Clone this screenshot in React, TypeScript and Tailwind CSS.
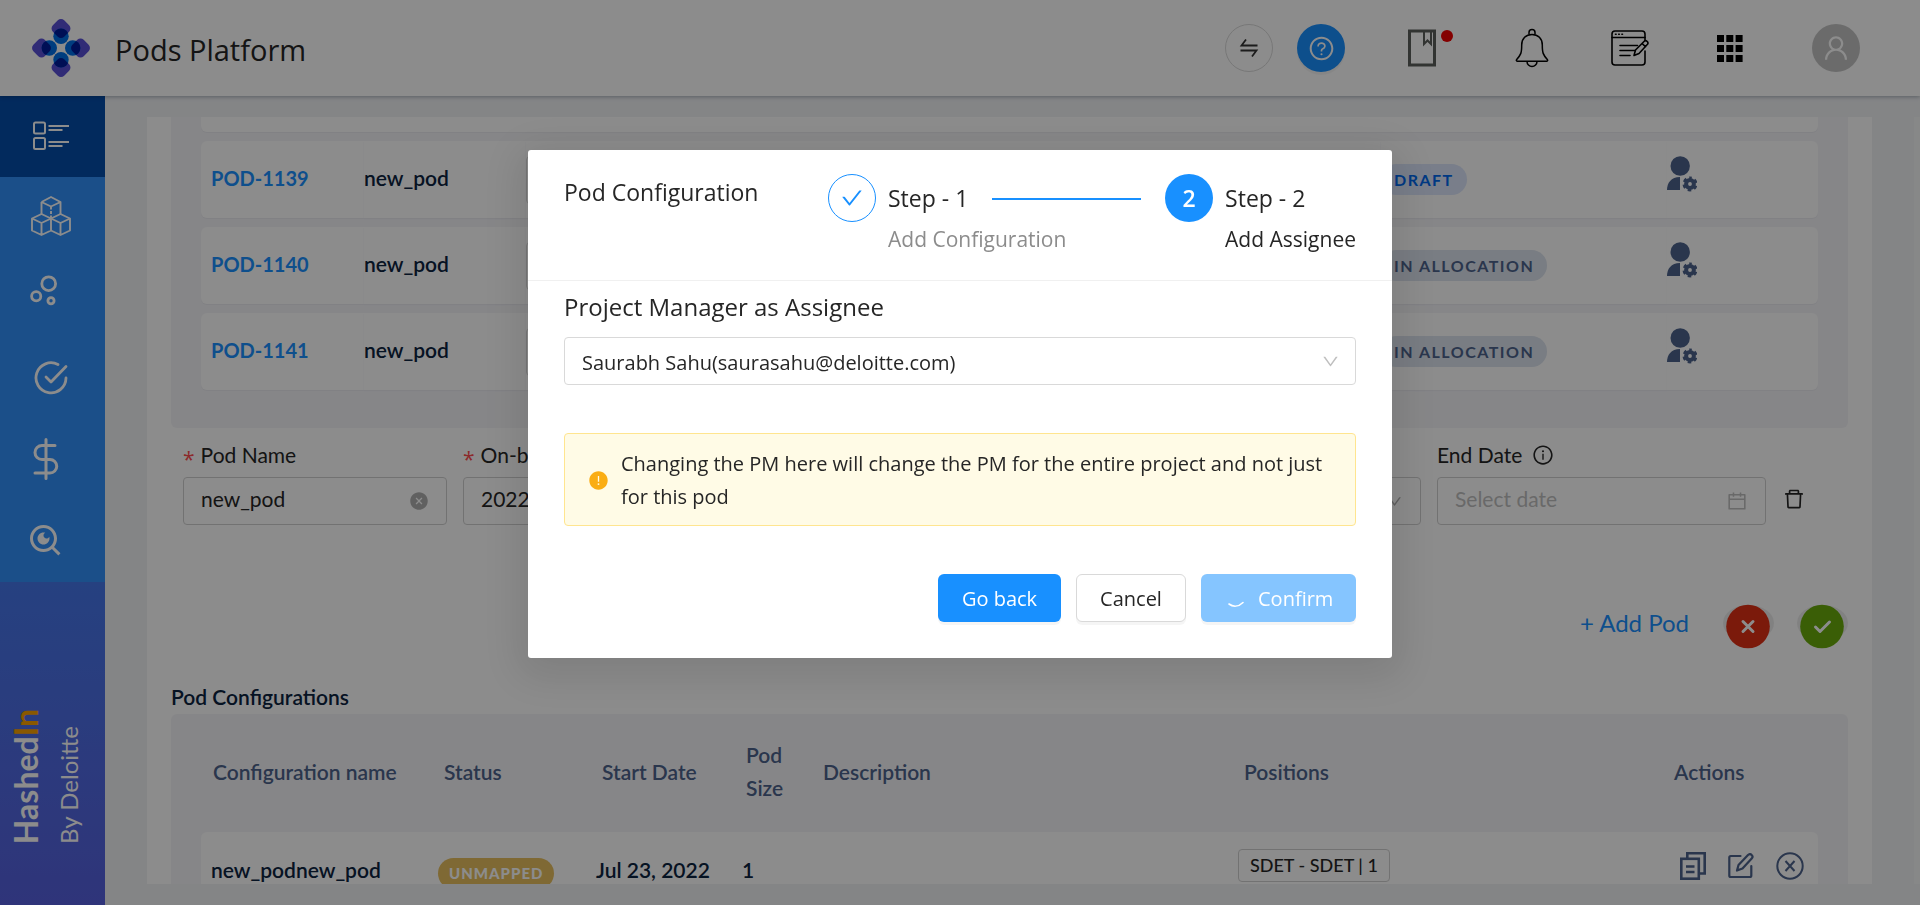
import type { ReactNode } from "react";
import {
  AiFillCloseCircle,
  AiFillExclamationCircle,
  AiOutlineCalendar,
  AiOutlineCheck,
  AiOutlineDelete,
  AiOutlineDown,
  AiOutlineInfoCircle,
  AiOutlineQuestionCircle,
  AiOutlineUser,
} from "react-icons/ai";
import { RiSearchEyeLine } from "react-icons/ri";

const BODY_FONT = "font-['Lato',sans-serif]";
const UI_FONT = "font-['Open_Sans','Noto_Sans',sans-serif]";

function Logo() {
  const petal = (deg: number) => (
    <g key={deg} transform={`rotate(${deg} 29 29)`}>
      <rect x="21" y="1.500" width="16" height="16" rx="4.500" transform="rotate(45 29 9.500)" fill="#5a50d8" />
      <circle cx="29" cy="17.300" r="7.700" fill="#0070e8" />
      <clipPath id={`petal-${deg}`}>
        <rect x="21" y="1.500" width="16" height="16" rx="4.500" transform="rotate(45 29 9.500)" />
      </clipPath>
      <circle cx="29" cy="17.300" r="7.700" fill="#001c9c" clipPath={`url(#petal-${deg})`} />
    </g>
  );
  return (
    <svg viewBox="0 0 58 58" className="size-[58px] shrink-0" aria-hidden="true">
      {[0, 90, 180, 270].map(petal)}
    </svg>
  );
}

function SwapIcon() {
  return (
    <svg viewBox="0 0 20 20" className="size-5" fill="none" stroke="#333" strokeWidth="1.800" aria-hidden="true">
      <path d="M18.500 7.500H2.500L7 1.500M1.500 12.500H17.500L13 18.500" />
    </svg>
  );
}

function BookmarkIcon() {
  return (
    <svg viewBox="0 0 46 38" className="h-[38px] w-[46px]" fill="none" aria-hidden="true">
      <rect x="2.500" y="2" width="25" height="34" stroke="#5c605c" strokeWidth="3" />
      <path d="M17 3v12l3.500-3.500L24 15V3" stroke="#5c605c" strokeWidth="2" />
      <circle cx="40" cy="7" r="6" fill="#f00000" />
    </svg>
  );
}

function BellIcon() {
  return (
    <svg viewBox="0 0 34 40" className="h-10 w-[34px]" fill="none" stroke="#000" strokeWidth="1.500" strokeLinejoin="round" aria-hidden="true">
      <path d="M14 6.500V4.500a3 3 0 0 1 6 0v2" />
      <path d="M17 6.500c-6 0-10.300 4-10.300 10.500 0 8-.7 9.500-5 14.500-.7 1-.2 1.800.8 1.800h29c1 0 1.500-.8.800-1.800-4.300-5-5-6.500-5-14.500C27.300 10.500 23 6.500 17 6.500z" />
      <path d="M12 33.500a5 5 0 0 0 10 0" />
    </svg>
  );
}

function NotesIcon() {
  return (
    <svg viewBox="0 0 38 36" className="h-9 w-[38px]" fill="none" stroke="#000" strokeWidth="1.600" strokeLinejoin="round" strokeLinecap="round" aria-hidden="true">
      <path d="M34 11V4a3 3 0 0 0-3-3H4a3 3 0 0 0-3 3v28a3 3 0 0 0 3 3h27a3 3 0 0 0 3-3V21" />
      <path d="M1 7.500h33M4.500 4.300h.6M7.700 4.300h.6M10.900 4.300h.6" />
      <path d="M9 15.500h17.500M9 20.500h15M9 25.500h10" />
      <path d="m23 25.500 1.500-5.500L33 11.500c2-2 5 .5 3.500 2.800L28 23.500l-5 2zM31 13.500l3.500 3.200" fill="#fff" />
    </svg>
  );
}

function GridIcon() {
  return (
    <svg viewBox="0 0 26 27" className="h-[27px] w-[26px]" fill="#000" aria-hidden="true">
      {[0, 1, 2].map((r) => [0, 1, 2].map((c) => <rect key={`${r}${c}`} x={c * 9.300} y={r * 10} width="7" height="7" />))}
    </svg>
  );
}

function ListIcon() {
  return (
    <svg viewBox="0 0 36 30" className="h-[30px] w-9" fill="none" stroke="#fff" strokeWidth="2" aria-hidden="true">
      <rect x="1" y="1.500" width="11" height="11" rx="1.500" />
      <rect x="1" y="17" width="11" height="11" rx="1.500" />
      <path d="M15.500 5H36M15.500 9H29.500M15.500 21H36M15.500 25H29.500" />
    </svg>
  );
}

function CubesIcon() {
  return (
    <svg viewBox="0 0 40 40" className="size-10" fill="none" stroke="#fff" strokeWidth="1.900" strokeLinejoin="round" aria-hidden="true">
      <path d="M10.500 6 20 1l9.500 5v12M10.500 6v12M10.500 6 20 10.500 29.500 6" />
      <path d="M20 10.500V22" strokeDasharray="3 1.500" />
      <path d="M1 22.500 10.500 18 20 22.500v12L10.500 39 1 34.500zM1 22.500l9.500 4.500 9.500-4.500M10.500 27v12" />
      <path d="M20 22.500 29.500 18l9.500 4.500v12L29.500 39 20 34.500M20 22.500l9.500 4.500 9.500-4.500M29.500 27v12" />
    </svg>
  );
}

function BubblesIcon() {
  return (
    <svg viewBox="0 0 28 31" className="h-[31px] w-7" fill="none" stroke="#fff" strokeWidth="2.800" aria-hidden="true">
      <circle cx="18.700" cy="8.700" r="6.900" />
      <circle cx="6.200" cy="21.200" r="4.600" />
      <circle cx="21" cy="25.700" r="3.100" />
    </svg>
  );
}

function TaskIcon() {
  return (
    <svg viewBox="0 0 34 34" className="size-[34px]" fill="none" stroke="#fff" strokeWidth="2.800" strokeLinecap="round" strokeLinejoin="round" aria-hidden="true">
      <path d="M24 3.500A15 15 0 1 0 32 17" />
      <path d="m12 16 5 5L32 5.500" />
    </svg>
  );
}

function DollarIcon() {
  return (
    <svg viewBox="0 0 26 42" className="h-[42px] w-[26px]" fill="none" stroke="#fff" strokeWidth="3" strokeLinecap="round" aria-hidden="true">
      <path d="M13 1.500v39M22 7.500H9a6.500 6.500 0 0 0 0 14h8a6.500 6.500 0 0 1 0 13.500H2" />
    </svg>
  );
}

function UserGearIcon() {
  return (
    <svg viewBox="0 0 30 36" className="h-9 w-[30px]" aria-hidden="true">
      <ellipse cx="13.200" cy="10" rx="9.700" ry="9.800" fill="#4d638c" />
      <path d="M13 21v13H0c0-7 4-13 13-13z" fill="#4d638c" />
      <circle cx="23" cy="28" r="3.900" fill="none" stroke="#4d638c" strokeWidth="4" />
      <circle cx="23" cy="28" r="6" fill="none" stroke="#4d638c" strokeWidth="3" strokeDasharray="3.400 2.883" strokeDashoffset="1.700" transform="rotate(-90 23 28)" />
    </svg>
  );
}

function CopyIcon() {
  return (
    <svg viewBox="0 0 26 28" className="h-7 w-[26px]" fill="none" stroke="#4d638c" strokeWidth="2.600" aria-hidden="true">
      <path d="M7.300 6V1.300h17.400V21.500H20" />
      <rect x="1.300" y="6.800" width="17.500" height="19.900" />
      <path d="M6 14.500h8.500M6 20h8.500" />
    </svg>
  );
}

function EditIcon() {
  return (
    <svg viewBox="0 0 26 26" className="size-[26px]" fill="none" stroke="#4d638c" strokeWidth="2.200" strokeLinecap="round" strokeLinejoin="round" aria-hidden="true">
      <path d="M12.500 3H2.800C2 3 1.300 3.700 1.300 4.500v18c0 .8.700 1.500 1.500 1.500h19c.8 0 1.500-.7 1.500-1.500V13" />
      <path d="M9 17.500 10.500 12 20 2c2.500-2.300 6 1 3.700 3.500L14.500 15.500z" />
    </svg>
  );
}

function CloseRingIcon() {
  return (
    <svg viewBox="0 0 28 28" className="size-7" fill="none" stroke="#4d638c" strokeWidth="2" aria-hidden="true">
      <circle cx="14" cy="14" r="12.700" />
      <path d="M9.500 9l9 10M18.500 9l-9 10" />
    </svg>
  );
}

function RoundAction({ label, fill, children }: { label: string; fill: string; children: ReactNode }) {
  return (
    <button type="button" aria-label={label}>
      <svg viewBox="0 0 51 52" className="h-[52px] w-[51px]" aria-hidden="true">
        <ellipse cx="25.500" cy="26" rx="25.500" ry="18" fill="#ececec" />
        <circle cx="25" cy="29.500" r="21.800" fill={fill} />
        <g fill="none" stroke="#fff" strokeWidth="3" strokeLinecap="round" strokeLinejoin="round">
          {children}
        </g>
      </svg>
    </button>
  );
}

function NavItem({ label, className, children }: { label: string; className: string; children: ReactNode }) {
  return (
    <a href="#" aria-label={label} className={`flex h-[81px] items-center ${className}`}>
      {children}
    </a>
  );
}

const pods = [
  { id: "POD-1139", status: "DRAFT", tone: "bg-[#dce6fb] text-[#0068ee]" },
  { id: "POD-1140", status: "IN ALLOCATION", tone: "bg-[#dce3ee] text-[#4d638c]" },
  { id: "POD-1141", status: "IN ALLOCATION", tone: "bg-[#dce3ee] text-[#4d638c]" },
];

function PodsTable() {
  const cell = "bg-white p-0 shadow-[0_1px_1px_#ebebf0]";
  return (
    <div className="rounded-b-md bg-[#f5f5f8] px-[30px] pb-[29px]">
      <table className="-mt-[9px] w-full table-fixed border-separate border-spacing-x-0 border-spacing-y-[9px] text-left text-[21px] leading-[33px]">
        <colgroup>
          <col className="w-[163px]" />
          <col className="w-[162px]" />
          <col />
          <col className="w-[286px]" />
          <col className="w-[151px]" />
        </colgroup>
        <tbody>
          <tr className="h-[15px]">
            <td colSpan={5} className={`${cell} rounded-b-md`} />
          </tr>
          {pods.map((pod) => (
            <tr key={pod.id} className="h-[77px]">
              <td className={`${cell} rounded-l-md pb-1 pl-2.5`}>
                <a href="#" className="text-[20px] font-bold text-[#1a90ff]">{pod.id}</a>
              </td>
              <td className={`${cell} pb-1 font-semibold text-[#0c2340]`}>new_pod</td>
              <td className={cell}>
                <select aria-label="Configuration" className="block h-12 w-[300px] appearance-none rounded-sm border border-[#d9d9d9]" />
              </td>
              <td className={`${cell} pb-1`}>
                <span className={`inline-block rounded-full px-[13px] align-middle text-[16px] leading-[31px] font-bold tracking-[1.5px] ${pod.tone}`}>
                  {pod.status}
                </span>
              </td>
              <td className={`${cell} rounded-r-md pb-3`}>
                <button type="button" aria-label={`Manage ${pod.id}`} className="block">
                  <UserGearIcon />
                </button>
              </td>
            </tr>
          ))}
        </tbody>
      </table>
    </div>
  );
}

function Field({ id, label, required, info, className, children }: {
  id: string; label: string; required?: boolean; info?: boolean; className: string; children: ReactNode;
}) {
  return (
    <div className={className}>
      <label htmlFor={id} className="mb-1.5 flex h-[33px] items-center leading-[33px] whitespace-nowrap">
        {required && <span className="mt-2 mr-1.5 leading-6 font-['Open_Sans',sans-serif] text-[#ff4d4f]">*</span>}
        {label}
        {info && <AiOutlineInfoCircle className="ml-2.5 size-[22px]" />}
      </label>
      <div className="flex h-12 items-center rounded-sm border border-[#d0d0d0] px-[17px]">{children}</div>
    </div>
  );
}

function PodForm() {
  return (
    <form className="flex items-end gap-4 pt-2.5 pr-[42px] pl-3 text-[21px] text-[#262626]">
      <Field id="pod-name" label="Pod Name" required className="w-[264px]">
        <input id="pod-name" defaultValue="new_pod" className="min-w-0 flex-1 pb-1 outline-none" />
        <AiFillCloseCircle className="size-5 shrink-0 text-[#b0b0b0]" />
      </Field>
      <Field id="onboarding" label="On-boarding Date" required className="min-w-0 flex-1">
        <input id="onboarding" defaultValue="2022-07-23" className="min-w-0 flex-1 pb-1 outline-none" />
      </Field>
      <Field id="configuration" label="Configuration" required className="min-w-0 flex-1">
        <select id="configuration" className="min-w-0 flex-1 appearance-none outline-none" />
        <AiOutlineDown className="size-[17px] shrink-0 text-[#b0b0b0]" />
      </Field>
      <Field id="end-date" label="End Date" info className="w-[329px]">
        <input id="end-date" placeholder="Select date" className="min-w-0 flex-1 pb-1 outline-none placeholder:text-[#bfbfbf]" />
        <AiOutlineCalendar className="size-[22px] shrink-0 text-[#bfbfbf]" />
      </Field>
      <button type="button" aria-label="Delete pod" className="flex h-12 items-center pb-1">
        <AiOutlineDelete className="size-6" />
      </button>
    </form>
  );
}

function ConfigurationsTable() {
  const head = "p-0 pb-1 font-semibold text-[#4d638c]";
  const cell = "bg-white p-0";
  return (
    <div className="rounded-t-md bg-[#f5f5f8] px-[30px]">
      <table className="w-full table-fixed border-separate border-spacing-0 text-left text-[21px] leading-[33px]">
        <colgroup>
          <col className="w-[237px]" />
          <col className="w-[158px]" />
          <col className="w-[146px]" />
          <col className="w-[81px]" />
          <col />
          <col className="w-[430px]" />
          <col className="w-[144px]" />
        </colgroup>
        <thead>
          <tr className="h-[118px]">
            <th className={`${head} pl-3`}>Configuration name</th>
            <th className={`${head} pl-1.5`}>Status</th>
            <th className={`${head} pl-1.5`}>Start Date</th>
            <th className={`${head} pr-6 pl-1`}>Pod Size</th>
            <th className={head}>Description</th>
            <th className={head}>Positions</th>
            <th className={head}>Actions</th>
          </tr>
        </thead>
        <tbody>
          <tr className="h-[79px] font-semibold text-[#0c2340]">
            <td className={`${cell} rounded-l-md pb-1 pl-2.5`}>new_podnew_pod</td>
            <td className={cell}>
              <span className="inline-block rounded-full bg-[#e8c060] px-[11px] align-middle text-[15px] leading-[31px] font-black tracking-[1px] text-white">
                UNMAPPED
              </span>
            </td>
            <td className={`${cell} pb-1`}>Jul 23, 2022</td>
            <td className={`${cell} pb-1`}>1</td>
            <td className={cell} />
            <td className={`${cell} pb-4`}>
              <span className="-ml-1.5 inline-block rounded-sm border border-[#d0d0d0] px-[11px] align-middle text-[18px] leading-[31px] font-medium text-[#262626]">
                SDET - SDET | 1
              </span>
            </td>
            <td className={`${cell} rounded-r-md pb-3`}>
              <div className="flex items-center gap-[22px] pl-1.5">
                <button type="button" aria-label="Duplicate"><CopyIcon /></button>
                <button type="button" aria-label="Edit"><EditIcon /></button>
                <button type="button" aria-label="Remove"><CloseRingIcon /></button>
              </div>
            </td>
          </tr>
        </tbody>
      </table>
    </div>
  );
}

function StepsModal() {
  const button = "h-12 rounded-md text-[20px] leading-[33px] shadow-[0_3px_0_rgba(0,0,0,0.04)]";
  return (
    <div className="fixed inset-0 flex items-start justify-center bg-black/45 pt-[150px]">
      <section
        role="dialog"
        aria-modal="true"
        aria-labelledby="dialog-title"
        className={`w-[864px] rounded-[3px] bg-white text-[20px] leading-[33px] text-[#262626] shadow-[0_9px_42px_12px_rgba(0,0,0,0.1)] ${UI_FONT}`}
      >
        <header className="flex h-[131px] justify-between border-b border-[#f0f0f0] px-9 pt-6">
          <h2 id="dialog-title" className="pt-0.5 text-[23px] font-medium">Pod Configuration</h2>
          <ol className="flex w-[528px] gap-6">
            <li className="flex min-w-0 flex-1 gap-3">
              <span className="flex size-12 shrink-0 items-center justify-center rounded-full border border-[#1890ff] text-[#1890ff]">
                <AiOutlineCheck className="size-6" />
              </span>
              <div className="min-w-0 flex-1 pt-2">
                <div className="flex items-center gap-6">
                  <span className="text-[23px] font-medium">Step - 1</span>
                  <span className="h-0.5 flex-1 bg-[#1890ff]" />
                </div>
                <p className="mt-2 text-[21px] whitespace-nowrap text-[#8c8c8c]">Add Configuration</p>
              </div>
            </li>
            <li className="flex shrink-0 gap-3">
              <span className="flex size-12 shrink-0 items-center justify-center rounded-full bg-[#1890ff] text-[23px] font-semibold text-white">
                2
              </span>
              <div className="pt-2">
                <span className="block text-[23px] font-medium">Step - 2</span>
                <p className="mt-2 text-[21px] whitespace-nowrap">Add Assignee</p>
              </div>
            </li>
          </ol>
        </header>
        <div className="px-9 pt-2 pb-9">
          <label htmlFor="assignee" className="block text-[24px] leading-9 font-medium">Project Manager as Assignee</label>
          <div className="mt-3 flex h-12 items-center rounded-sm border border-[#d9d9d9] pr-[15px] pl-[17px]">
            <select id="assignee" className="min-w-0 flex-1 appearance-none bg-transparent pt-0.5 outline-none">
              <option>Saurabh Sahu(saurasahu@deloitte.com)</option>
            </select>
            <AiOutlineDown className="size-[19px] shrink-0 text-[#bfbfbf]" />
          </div>
          <div role="alert" className="mt-12 flex items-center gap-3 rounded-sm border border-[#ffe58f] bg-[#fffbe6] pt-[13px] pr-5 pb-3 pl-[23px]">
            <AiFillExclamationCircle className="size-[21px] shrink-0 text-[#faad14]" />
            <p>Changing the PM here will change the PM for the entire project and not just for this pod</p>
          </div>
          <div className="mt-12 flex justify-end gap-[15px]">
            <button type="button" className={`w-[123px] bg-[#1890ff] text-white ${button}`}>Go back</button>
            <button type="button" className={`w-[110px] border border-[#d9d9d9] bg-white ${button}`}>Cancel</button>
            <button type="button" className={`flex w-[155px] items-center gap-3 bg-[#85c5ff] pl-6 text-white ${button}`}>
              <svg viewBox="0 0 21 21" className="size-[21px]" fill="none" aria-hidden="true">
                <path d="M4 16c4 3 9.500 3 14-1.500" stroke="#fff" strokeWidth="1.600" strokeLinecap="round" />
              </svg>
              Confirm
            </button>
          </div>
        </div>
      </section>
    </div>
  );
}

export default function App() {
  return (
    <div className={`flex h-screen flex-col overflow-hidden bg-[#f0f2f5] ${BODY_FONT}`}>
      <header className="relative flex h-24 shrink-0 items-center bg-white pr-[60px] pl-8 shadow-[0_1px_4px_rgba(0,21,41,0.3)]">
        <Logo />
        <h1 className={`ml-[25px] flex-1 pt-1 text-[29px] text-[#262626] ${UI_FONT}`}>Pods Platform</h1>
        <div className="flex items-center">
          <button type="button" aria-label="Switch" className="flex size-12 items-center justify-center rounded-full border border-[#d9d9d9]">
            <SwapIcon />
          </button>
          <button type="button" aria-label="Help" className="ml-6 flex size-12 items-center justify-center rounded-full bg-[#1890ff] text-white shadow-[0_3px_0_rgba(0,0,0,0.04)]">
            <AiOutlineQuestionCircle className="size-[27px]" />
          </button>
          <button type="button" aria-label="Guide" className="ml-[62px]"><BookmarkIcon /></button>
          <button type="button" aria-label="Notifications" className="ml-[62px]"><BellIcon /></button>
          <button type="button" aria-label="Notes" className="ml-[62px]"><NotesIcon /></button>
          <button type="button" aria-label="Apps" className="ml-[68px]"><GridIcon /></button>
          <button type="button" aria-label="Account" className="ml-[69px] flex size-12 items-center justify-center rounded-full bg-[#c4c4c4] text-white">
            <AiOutlineUser className="size-[30px]" />
          </button>
        </div>
      </header>

      <div className="flex min-h-0 flex-1">
        <nav className="flex w-[105px] shrink-0 flex-col bg-[#3290f9]">
          <NavItem label="Dashboard" className="bg-[#054daa] pb-0.5 pl-[33px]"><ListIcon /></NavItem>
          <NavItem label="Pods" className="pb-1 pl-[31px]"><CubesIcon /></NavItem>
          <NavItem label="Allocation" className="pb-4 pl-[30px]"><BubblesIcon /></NavItem>
          <NavItem label="Tasks" className="pb-1 pl-[34px]"><TaskIcon /></NavItem>
          <NavItem label="Billing" className="pb-1 pl-[33px]"><DollarIcon /></NavItem>
          <NavItem label="Search" className="pb-1 pl-[27px]"><RiSearchEyeLine className="size-9 text-white" /></NavItem>
          <div className="flex min-h-0 flex-1 items-end bg-linear-to-b from-[#4577ea] to-[#5660de] pb-[61px] pl-[7px]">
            <span className="rotate-180 text-[32px] leading-[38px] font-bold whitespace-nowrap text-white [writing-mode:vertical-rl]">
              Hashed<span className="text-[#f9a000]">In</span>
            </span>
            <span className="ml-1.5 rotate-180 text-[24px] leading-9 whitespace-nowrap text-white [writing-mode:vertical-rl]">By Deloitte</span>
          </div>
        </nav>

        <main className="flex min-w-0 flex-1 py-[21px] pl-[42px]">
          <div className="min-w-0 flex-1 overflow-hidden bg-white px-6">
            <PodsTable />
            <PodForm />
            <div className="mt-[72px] flex items-center justify-end">
              <button type="button" className="mr-[34px] text-[24px] text-[#1a90ff]">+ Add Pod</button>
              <RoundAction label="Discard" fill="#e03014"><path d="m20 24.500 10 10m0-10-10 10" /></RoundAction>
              <span className="w-[23px]" />
              <RoundAction label="Save" fill="#6aac0c"><path d="m18.500 30 4.500 4.500 9.500-9.500" /></RoundAction>
            </div>
            <h2 className="mt-[31px] mb-px text-[21px] leading-[33px] font-semibold text-[#0c2340]">Pod Configurations</h2>
            <ConfigurationsTable />
          </div>
          <div className="ml-[42px] w-1.5 bg-[#f6f7f8]" />
        </main>
      </div>
      <StepsModal />
    </div>
  );
}
